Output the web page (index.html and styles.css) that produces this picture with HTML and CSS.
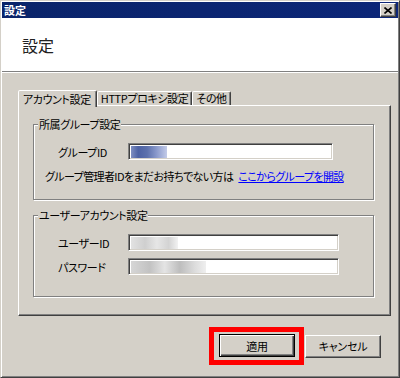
FILE: index.html
```
<!DOCTYPE html>
<html lang="ja">
<head>
    <meta charset="UTF-8">
    <title>設定</title>
    <link rel="stylesheet" href="styles.css">
</head>
<body>

<div class="window">
    <div class="titlebar">
        <span class="caption">設定</span>
        <button class="close" aria-label="閉じる">
            <svg width="8" height="7" viewBox="0 0 8 7">
                <path d="M0.5 0.5 L7.5 6.5 M7.5 0.5 L0.5 6.5" stroke="#000" stroke-width="1.6"/>
            </svg>
        </button>
    </div>

    <div class="header">
        <h1>設定</h1>
    </div>

    <div class="main">
        <div class="tabs">
            <div class="tab active">アカウント設定</div>
            <div class="tab">HTTPプロキシ設定</div>
            <div class="tab">その他</div>
        </div>

        <div class="panel">
            <div class="group group-affiliation">
                <span class="group-title">所属グループ設定</span>
                <div class="field">
                    <label>グループID</label>
                    <div class="input wide"><span class="blur blur-blue"></span></div>
                </div>
                <p class="note">グループ管理者IDをまだお持ちでない方は<a href="#">ここからグループを開設</a></p>
            </div>

            <div class="group group-account">
                <span class="group-title">ユーザーアカウント設定</span>
                <div class="field">
                    <label>ユーザーID</label>
                    <div class="input"><span class="blur blur-user"></span></div>
                </div>
                <div class="field">
                    <label>パスワード</label>
                    <div class="input"><span class="blur blur-pass"></span></div>
                </div>
            </div>
        </div>

        <div class="actions">
            <div class="highlight">
                <button class="btn default">適用</button>
            </div>
            <button class="btn">キャンセル</button>
        </div>
    </div>
</div>

</body>
</html>
```

FILE: styles.css
```
body {
    margin: 0;
    font-family: "Noto Sans CJK JP", "Noto Sans", sans-serif;
    font-size: 11px;
    font-feature-settings: "palt";
    letter-spacing: -0.4px;
    color: #000;
}

.window {
    width: 400px;
    height: 378px;
    box-sizing: border-box;
    background-color: #d4d0c8;
    border: 1px solid;
    border-color: #d4d0c8 #404040 #404040 #d4d0c8;
    box-shadow: inset 1px 1px 0 #fff, inset -1px -1px 0 #808080;
    padding: 1px;
    display: flex;
    flex-direction: column;
}

.titlebar {
    height: 16px;
    background: linear-gradient(to right, #0a246a, #0c2678);
    display: flex;
    align-items: center;
    justify-content: space-between;
    padding-left: 2px;
}

.caption {
    color: #fff;
    font-weight: bold;
    line-height: 14px;
    letter-spacing: 0;
}

.close {
    width: 16px;
    height: 14px;
    margin-right: 2px;
    padding: 0;
    background-color: #d4d0c8;
    border: 1px solid;
    border-color: #fff #404040 #404040 #fff;
    box-shadow: inset -1px -1px 0 #808080;
    display: flex;
    align-items: center;
    justify-content: center;
}

.header {
    height: 53px;
    background-color: #fff;
    border-bottom: 1px solid #808080;
    box-shadow: 0 1px 0 #fff;
    display: flex;
    align-items: center;
    padding-left: 20px;
}

.header h1 {
    margin: 0;
    font-size: 16px;
    font-weight: normal;
    letter-spacing: 0;
    color: #222;
}

.main {
    padding-top: 17px;
}

.tabs {
    display: flex;
    align-items: flex-end;
    margin-left: 16px;
    height: 16px;
    position: relative;
    z-index: 1;
}

.tab {
    height: 13px;
    line-height: 13px;
    padding: 0 3px;
    border: 1px solid;
    border-bottom: none;
    border-color: #fff #404040 transparent #fff;
    box-shadow: inset -1px 0 0 #808080;
    border-radius: 2px 2px 0 0;
    background-color: #d4d0c8;
    white-space: nowrap;
}

.tab:last-child {
    padding: 0 3px;
}

.tab.active {
    height: 16px;
    line-height: 16px;
    padding: 0 5px 0 4px;
    margin-bottom: -2px;
}

.panel {
    margin: 0 7px 0 16px;
    height: 211px;
    box-sizing: border-box;
    border: 1px solid;
    border-color: #fff #404040 #404040 #fff;
    box-shadow: inset -1px -1px 0 #808080;
    padding: 18px 16px 0 14px;
}

.group {
    position: relative;
    border: 1px solid #808080;
    box-shadow: inset 1px 1px 0 #fff, 1px 1px 0 #fff;
    box-sizing: border-box;
}

.group-affiliation {
    height: 76px;
    padding-top: 18px;
}

.group-account {
    height: 82px;
    margin-top: 15px;
    padding-top: 18px;
}

.group-title {
    position: absolute;
    top: -7px;
    left: 4px;
    padding: 0 1px;
    line-height: 13px;
    background-color: #d4d0c8;
}

.field {
    display: flex;
    align-items: center;
    padding-left: 24px;
    margin-bottom: 7px;
}

.field label {
    width: 70px;
}

.input {
    width: 211px;
    height: 17px;
    box-sizing: border-box;
    background-color: #fff;
    border: 1px solid;
    border-color: #808080 #fff #fff #808080;
    box-shadow: inset 1px 1px 0 #404040, inset -1px -1px 0 #d4d0c8;
    padding: 2px 0 0 2px;
}

.input.wide {
    width: 205px;
}

.blur {
    display: block;
    height: 12px;
}

.blur-blue {
    width: 36px;
    background: linear-gradient(90deg, #7f8fc2 0%, #4d62a4 20%, #5d71ad 45%, #8898cb 70%, #c3cbe8 100%);
}

.blur-user {
    width: 47px;
    background: linear-gradient(90deg, #e2e2e2 0%, #cfcfcf 30%, #e6e6e6 55%, #d3d3d3 80%, #f2f2f2 100%);
}

.blur-pass {
    width: 75px;
    background: linear-gradient(90deg, #d6d6d6 0%, #c2c2c2 25%, #e4e4e4 45%, #bdbdbd 65%, #dcdcdc 85%, #efefef 100%);
}

.note {
    margin: 10px 0 0 11px;
    line-height: 13px;
    letter-spacing: -0.6px;
}

.note a {
    color: #0000ff;
    margin-left: 5px;
}

.actions {
    display: flex;
    justify-content: flex-end;
    align-items: center;
    margin: 11px 17px 0 0;
}

.highlight {
    border: 5px solid #ff0000;
    padding: 2px 4px 3px 5px;
    display: flex;
}

.btn {
    width: 76px;
    height: 23px;
    box-sizing: border-box;
    font-family: inherit;
    font-size: 11px;
    font-feature-settings: "palt";
    letter-spacing: -0.2px;
    background-color: #d4d0c8;
    border: 1px solid;
    border-color: #fff #404040 #404040 #fff;
    box-shadow: inset -1px -1px 0 #808080;
    padding: 0;
    margin-left: 1px;
}

.btn.default {
    margin-left: 0;
    border: 1px solid #000;
    box-shadow: inset 1px 1px 0 #fff, inset -1px -1px 0 #404040, inset -2px -2px 0 #808080;
}
```
